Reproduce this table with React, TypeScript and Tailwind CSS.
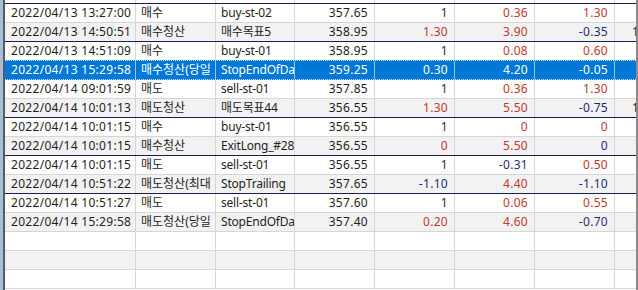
import React from "react";

type Tone = "k" | "r" | "b";
type Row = {
  d: string;
  t: string;
  n: string;
  p: string;
  q: [string, Tone];
  a: [string, Tone];
  c: [string, Tone];
  x?: string;
  gray: boolean;
  dark: boolean;
  sel?: boolean;
};

const rows: Row[] = [
  { d: "2022/04/13 13:27:00", t: "매수", n: "buy-st-02", p: "357.65", q: ["1", "k"], a: ["0.36", "r"], c: ["1.30", "r"], gray: false, dark: false },
  { d: "2022/04/13 14:50:51", t: "매수청산", n: "매수목표5", p: "358.95", q: ["1.30", "r"], a: ["3.90", "r"], c: ["-0.35", "b"], x: "1", gray: true, dark: true },
  { d: "2022/04/13 14:51:09", t: "매수", n: "buy-st-01", p: "358.95", q: ["1", "k"], a: ["0.08", "r"], c: ["0.60", "r"], gray: false, dark: false },
  { d: "2022/04/13 15:29:58", t: "매수청산(당일", n: "StopEndOfDay", p: "359.25", q: ["0.30", "k"], a: ["4.20", "k"], c: ["-0.05", "k"], gray: false, dark: false, sel: true },
  { d: "2022/04/14 09:01:59", t: "매도", n: "sell-st-01", p: "357.85", q: ["1", "k"], a: ["0.36", "r"], c: ["1.30", "r"], gray: false, dark: false },
  { d: "2022/04/14 10:01:13", t: "매도청산", n: "매도목표44", p: "356.55", q: ["1.30", "r"], a: ["5.50", "r"], c: ["-0.75", "b"], x: "1", gray: true, dark: true },
  { d: "2022/04/14 10:01:15", t: "매수", n: "buy-st-01", p: "356.55", q: ["1", "k"], a: ["0", "r"], c: ["0", "r"], gray: false, dark: false },
  { d: "2022/04/14 10:01:15", t: "매수청산", n: "ExitLong_#28", p: "356.55", q: ["0", "r"], a: ["5.50", "r"], c: ["0", "b"], gray: true, dark: true },
  { d: "2022/04/14 10:01:15", t: "매도", n: "sell-st-01", p: "356.55", q: ["1", "k"], a: ["-0.31", "b"], c: ["0.50", "r"], gray: false, dark: false },
  { d: "2022/04/14 10:51:22", t: "매도청산(최대", n: "StopTrailing", p: "357.65", q: ["-1.10", "b"], a: ["4.40", "r"], c: ["-1.10", "b"], gray: true, dark: true },
  { d: "2022/04/14 10:51:27", t: "매도", n: "sell-st-01", p: "357.60", q: ["1", "k"], a: ["0.06", "r"], c: ["0.55", "r"], gray: false, dark: false },
  { d: "2022/04/14 15:29:58", t: "매도청산(당일", n: "StopEndOfDay", p: "357.40", q: ["0.20", "r"], a: ["4.60", "r"], c: ["-0.70", "b"], gray: true, dark: false },
];

const toneClass = (t: Tone, sel?: boolean) =>
  sel ? "text-white" : t === "r" ? "text-[#c0392b]" : t === "b" ? "text-[#1f2a7a]" : "text-[#2a2a2a]";

function Cells({ r }: { r?: Row }) {
  const sel = r?.sel;
  const line = sel ? "border-[#9cc4ea]" : "border-[#d6d6d6]";
  const base = `h-full shrink-0 border-r ${line} overflow-hidden whitespace-nowrap flex items-center`;
  const txt = sel ? "text-white" : "text-[#1e1e1e]";
  const num = "tracking-[0.3px]";
  return (
    <>
      <div className={`${base} w-[131px] pl-[6px] ${num} ${txt}`}>{r?.d}</div>
      <div className={`${base} w-[80px] pl-[5px] ${txt}`}>{r?.t}</div>
      <div className={`${base} w-[79px] pl-[5px] tracking-[-0.2px] ${txt}`}>{r?.n}</div>
      <div className={`${base} w-[80px] justify-end pr-[6px] ${num} ${txt}`}>{r?.p}</div>
      <div className={`${base} w-[80px] justify-end pr-[6px] ${num} ${r ? toneClass(r.q[1], sel) : ""}`}>{r?.q[0]}</div>
      <div className={`${base} w-[80px] justify-end pr-[6px] ${num} ${r ? toneClass(r.a[1], sel) : ""}`}>{r?.a[0]}</div>
      <div className={`${base} w-[80px] justify-end pr-[6px] ${num} ${r ? toneClass(r.c[1], sel) : ""}`}>{r?.c[0]}</div>
      <div className={`h-full flex-1 overflow-hidden whitespace-nowrap flex items-center pl-[17px] ${txt}`}>{r?.x}</div>
    </>
  );
}

export default function App() {
  return (
    <div
      className="w-[638px] h-[290px] overflow-hidden flex bg-white text-[12px] leading-none"
      style={{ fontFamily: '"Noto Sans", "Noto Sans CJK KR", sans-serif' }}
    >
      <div className="w-[3px] h-full bg-[#a7c0da]" />
      <div className="w-[2px] h-full bg-[#5b5b5b]" />
      <div className="flex-1 h-full flex flex-col overflow-hidden">
        <div className="h-[4px] shrink-0 flex border-b border-[#1c1c4e] bg-white">
          <Cells />
        </div>
        {rows.map((r, i) => (
          <div
            key={i}
            className={`h-[19px] shrink-0 flex border-b ${
              r.sel
                ? "bg-[#0078d7] border-dotted border-[#cfe2f5] border-t border-t-[#cfe2f5] -mt-px h-[20px]"
                : r.gray
                ? "bg-[#f2f2f2]"
                : "bg-white"
            } ${r.sel ? "" : r.dark ? "border-[#1c1c4e]" : "border-[#d6d6d6]"}`}
          >
            <Cells r={r} />
          </div>
        ))}
        {[false, true, false].map((g, i) => (
          <div
            key={`e${i}`}
            className={`h-[19px] shrink-0 flex border-b border-[#d6d6d6] ${g ? "bg-[#f2f2f2]" : "bg-white"}`}
          >
            <Cells />
          </div>
        ))}
      </div>
      <div className="w-[2px] h-full bg-[#8a8a8a]" />
    </div>
  );
}
